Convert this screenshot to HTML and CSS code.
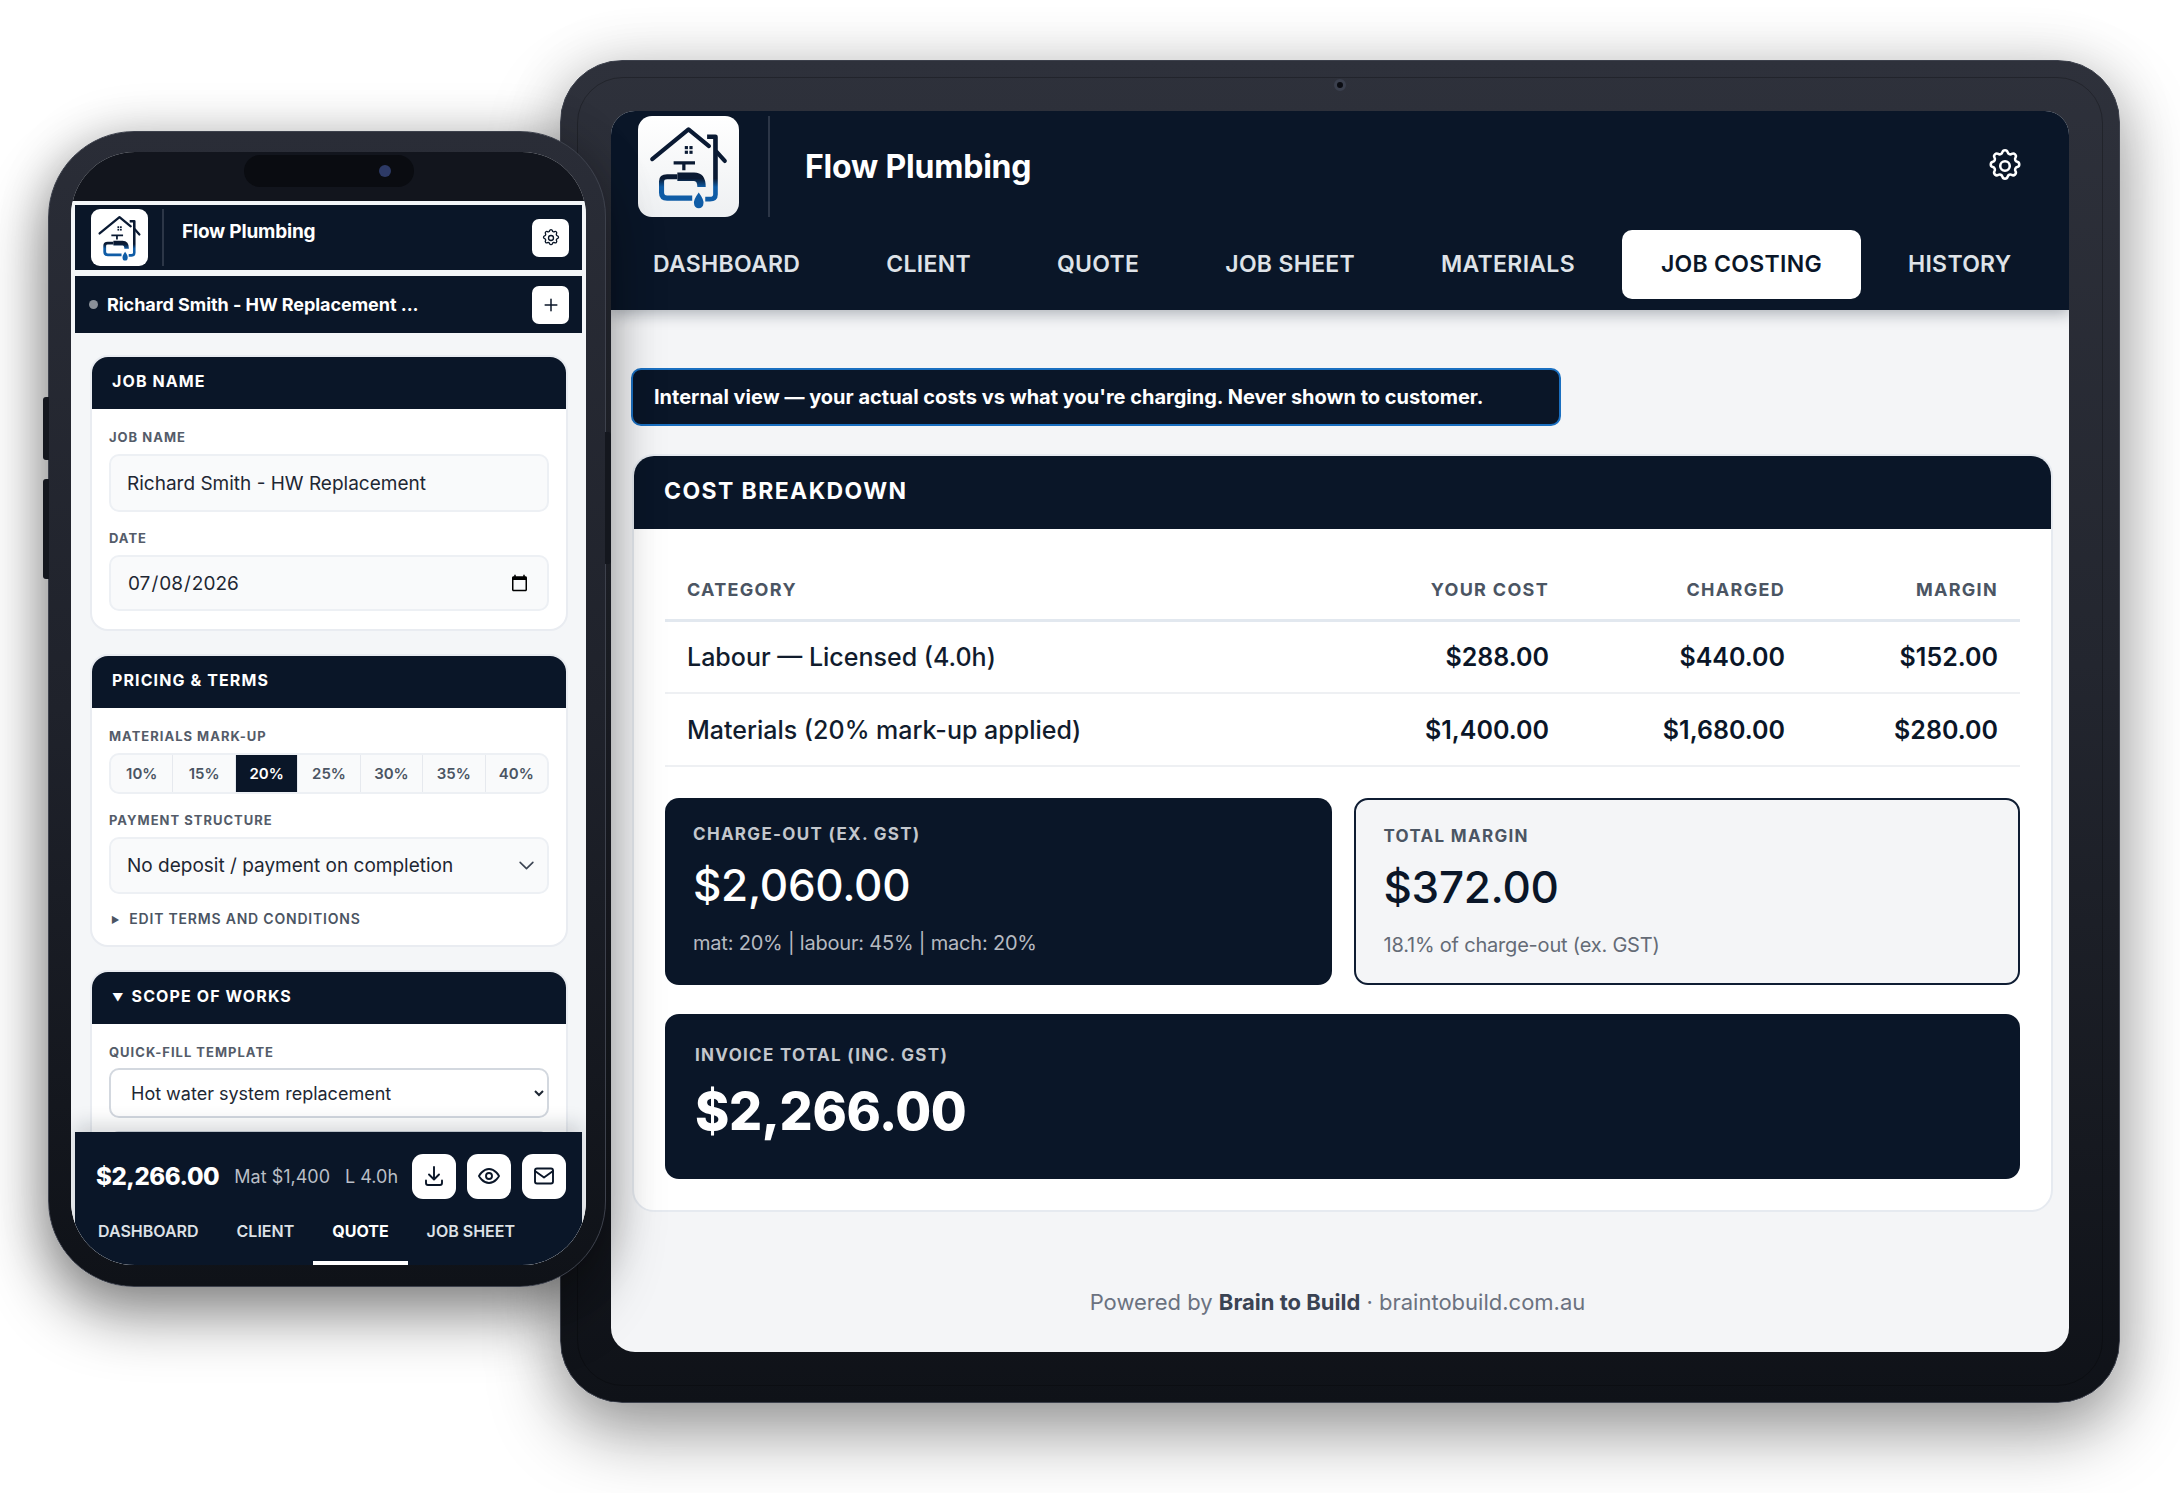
FILE: index.html
```html
<!DOCTYPE html>
<html lang="en">
<head>
<meta charset="UTF-8">
<meta name="viewport" content="width=device-width, initial-scale=1">
<title>Flow Plumbing</title>
<link rel="stylesheet" href="styles.css">
</head>
<body>

<svg class="defs" width="0" height="0">
<defs>
<linearGradient id="logoInk" gradientUnits="userSpaceOnUse" x1="0" y1="0" x2="0" y2="100">
<stop offset="0.63" stop-color="#0a1a33"/>
<stop offset="0.72" stop-color="#0f5ca6"/>
</linearGradient>
<symbol id="logo" viewBox="0 0 100 100">
<g fill="none" stroke="url(#logoInk)" stroke-linecap="round" stroke-linejoin="round">
<path stroke-width="4.5" d="M11 42 50 10 72 28M80 34 89 44"/>
<path stroke-width="5" stroke-linecap="butt" d="M70 18H79V80Q79 85 73 85H68"/>
<path stroke-width="3.5" stroke-linecap="butt" d="M34 46H57M45 46V54"/>
<path stroke-width="5.5" stroke-linecap="butt" d="M54 84H27Q21 84 21 78V66Q21 61 27 61H38"/>
<path stroke-width="9" stroke-linecap="butt" d="M38 61H56Q64 61 64 72"/>
</g>
<g fill="#0a1a33">
<rect x="46" y="28" width="3.4" height="3.4"/><rect x="51" y="28" width="3.4" height="3.4"/>
<rect x="46" y="33" width="3.4" height="3.4"/><rect x="51" y="33" width="3.4" height="3.4"/>
</g>
<path fill="#0f5ca6" d="M61 78Q67 86 66 90A5 5 0 0 1 56 90Q55 86 61 78Z"/>
</symbol>
<symbol id="gear" viewBox="0 0 24 24">
<path fill="none" stroke="currentColor" stroke-width="1.6" stroke-linecap="round" stroke-linejoin="round" d="M10.33 3.32c.43-1.76 2.93-1.76 3.35 0a1.72 1.72 0 0 0 2.57 1.07c1.54-.94 3.31.83 2.37 2.37a1.72 1.72 0 0 0 1.07 2.57c1.76.43 1.76 2.93 0 3.35a1.72 1.72 0 0 0-1.07 2.57c.94 1.54-.83 3.31-2.37 2.37a1.72 1.72 0 0 0-2.57 1.07c-.43 1.76-2.93 1.76-3.35 0a1.72 1.72 0 0 0-2.57-1.07c-1.54.94-3.31-.83-2.37-2.37a1.72 1.72 0 0 0-1.07-2.57c-1.76-.43-1.76-2.93 0-3.35a1.72 1.72 0 0 0 1.07-2.57c-.94-1.54.83-3.31 2.37-2.37 1 .6 2.3.07 2.57-1.07Z"/>
<circle cx="12" cy="12" r="3" fill="none" stroke="currentColor" stroke-width="1.6"/>
</symbol>
</defs>
</svg>

<!-- Tablet -->
<div class="tablet">
<span class="tablet-cam"></span>
<div class="tablet-screen">
<header class="t-header">
<div class="t-brand">
<div class="t-logo"><svg><use href="#logo"/></svg></div>
<div class="t-title">Flow Plumbing</div>
<svg class="t-gear"><use href="#gear"/></svg>
</div>
<nav class="t-nav">
<a>Dashboard</a>
<a>Client</a>
<a>Quote</a>
<a>Job Sheet</a>
<a>Materials</a>
<a class="active">Job Costing</a>
<a>History</a>
</nav>
</header>

<main class="t-main">
<div class="banner">Internal view — your actual costs vs what you're charging. Never shown to customer.</div>

<section class="t-card">
<h2>Cost Breakdown</h2>
<div class="t-card-body">
<table class="costs">
<thead>
<tr><th>Category</th><th>Your Cost</th><th>Charged</th><th>Margin</th></tr>
</thead>
<tbody>
<tr><td>Labour — Licensed (4.0h)</td><td>$288.00</td><td>$440.00</td><td>$152.00</td></tr>
<tr><td>Materials (20% mark-up applied)</td><td>$1,400.00</td><td>$1,680.00</td><td>$280.00</td></tr>
</tbody>
</table>

<div class="stats">
<div class="stat dark">
<div class="stat-label">Charge-out (ex. GST)</div>
<div class="stat-value">$2,060.00</div>
<div class="stat-sub">mat: 20% | labour: 45% | mach: 20%</div>
</div>
<div class="stat light">
<div class="stat-label">Total Margin</div>
<div class="stat-value">$372.00</div>
<div class="stat-sub">18.1% of charge-out (ex. GST)</div>
</div>
</div>

<div class="invoice">
<div class="stat-label">Invoice Total (inc. GST)</div>
<div class="invoice-value">$2,266.00</div>
</div>
</div>
</section>

<footer class="t-footer">Powered by <b>Brain to Build</b> · braintobuild.com.au</footer>
</main>
</div>
</div>

<!-- Phone -->
<div class="phone">
<span class="side-btn btn-a"></span>
<span class="side-btn btn-b"></span>
<span class="side-btn btn-c"></span>
<div class="phone-screen">
<div class="notch-zone"><div class="notch"><span></span></div></div>
<div class="p-app">
<div class="p-header">
<div class="p-logo"><svg><use href="#logo"/></svg></div>
<div class="p-title">Flow Plumbing</div>
<button class="p-icon-btn"><svg><use href="#gear"/></svg></button>
</div>
<div class="p-session">
<span class="dot"></span>
<span class="p-job">Richard Smith - HW Replacement ...</span>
<button class="p-icon-btn">
<svg viewBox="0 0 24 24"><path fill="none" stroke="currentColor" stroke-width="1.8" stroke-linecap="round" d="M12 5v14M5 12h14"/></svg>
</button>
</div>

<div class="p-scroll">
<section class="p-card">
<h3>Job Name</h3>
<div class="p-card-body">
<label class="p-label">Job Name</label>
<input class="p-input" value="Richard Smith - HW Replacement">
<label class="p-label next">Date</label>
<input class="p-input date" type="date" value="2026-07-08">
</div>
</section>

<section class="p-card">
<h3>Pricing &amp; Terms</h3>
<div class="p-card-body">
<label class="p-label">Materials Mark-up</label>
<div class="seg">
<span>10%</span><span>15%</span><span class="on">20%</span><span>25%</span><span>30%</span><span>35%</span><span>40%</span>
</div>
<label class="p-label next">Payment Structure</label>
<div class="p-select-wrap">
<select class="p-input plain"><option>No deposit / payment on completion</option></select>
<svg class="chev" viewBox="0 0 16 16"><path fill="none" stroke="currentColor" stroke-width="1.5" stroke-linecap="round" stroke-linejoin="round" d="M2 5l6 6 6-6"/></svg>
</div>
<div class="p-terms"><span class="tri">►</span>Edit terms and conditions</div>
</div>
</section>

<section class="p-card">
<h3><span class="tri-down">▼</span>Scope of Works</h3>
<div class="p-card-body">
<label class="p-label">Quick-fill Template</label>
<select class="p-input white"><option>Hot water system replacement</option></select>
<div class="p-input white ghost"></div>
</div>
</section>
</div>

<div class="p-bottom">
<div class="p-summary">
<b class="p-total">$2,266.00</b>
<span class="p-meta">Mat $1,400</span>
<span class="p-meta l">L 4.0h</span>
<div class="p-actions">
<button class="p-act">
<svg viewBox="0 0 24 24" fill="none" stroke="currentColor" stroke-width="1.9" stroke-linecap="round" stroke-linejoin="round"><path d="M12 3v12M7 10.5l5 5 5-5M4 16.5V19a2 2 0 0 0 2 2h12a2 2 0 0 0 2-2v-2.5"/></svg>
</button>
<button class="p-act">
<svg viewBox="0 0 24 24" fill="none" stroke="currentColor" stroke-width="1.9" stroke-linecap="round" stroke-linejoin="round"><path d="M2 12s3.6-7 10-7 10 7 10 7-3.6 7-10 7-10-7-10-7Z"/><circle cx="12" cy="12" r="3"/></svg>
</button>
<button class="p-act">
<svg viewBox="0 0 24 24" fill="none" stroke="currentColor" stroke-width="1.9" stroke-linecap="round" stroke-linejoin="round"><rect x="3" y="4.5" width="18" height="15" rx="2"/><path d="M3 7l9 6.5L21 7"/></svg>
</button>
</div>
</div>
<nav class="p-nav">
<a>Dashboard</a>
<a>Client</a>
<a class="active">Quote</a>
<a>Job Sheet</a>
</nav>
</div>
</div>
</div>
</div>

</body>
</html>
```

FILE: styles.css
```css
*{margin:0;padding:0;box-sizing:border-box;}
html,body{width:2180px;height:1493px;overflow:hidden;}
body{position:relative;background:#fff;font-family:"Inter","Liberation Sans",sans-serif;color:#0a1628;}
.defs{position:absolute;}
button{border:none;cursor:pointer;font-family:inherit;}

/* Tablet */
.tablet{
position:absolute;left:560px;top:60px;width:1560px;height:1343px;padding:50px;
border-radius:62px;border:1px solid #3d414c;
background:linear-gradient(180deg,#2e313b 0%,#23262f 45%,#0f1218 100%);
box-shadow:0 0 60px rgba(0,0,0,.12),0 30px 70px rgba(0,0,0,.38);
}
.tablet::before{
content:"";position:absolute;inset:16px;border-radius:46px;border:1px solid rgba(0,0,0,.25);
}
.tablet-cam{
position:absolute;left:773px;top:18px;width:12px;height:12px;border-radius:50%;
background:#0a0c12;border:3px solid #3a3f4d;
}
.tablet-screen{
position:relative;height:100%;border-radius:24px;overflow:hidden;background:#f4f5f7;
display:flex;flex-direction:column;
}

.t-header{background:#0a1628;height:199px;box-shadow:0 4px 14px rgba(10,22,40,.3);flex:none;position:relative;}
.t-brand{display:flex;align-items:center;height:110px;padding:0 27px;}
.t-logo{
width:101px;height:101px;border-radius:14px;background:linear-gradient(180deg,#fff,#eef0f2);flex:none;padding:4px;
margin-top:1px;
}
.t-logo svg{width:93px;height:93px;display:block;}
.t-title{
margin-left:29px;padding-left:35px;height:101px;line-height:101px;border-left:2px solid #2c3647;
font-size:32px;font-weight:700;color:#fff;letter-spacing:-.2px;flex:1;
}
.t-gear{width:38px;height:38px;color:#fff;margin-right:18px;}
.t-nav{display:flex;align-items:center;gap:8px;padding:9px 0 0 3px;}
.t-nav a{
height:69px;line-height:69px;padding:0 39px;border-radius:10px;white-space:nowrap;
font-size:23px;font-weight:600;text-transform:uppercase;color:#dfe3e8;letter-spacing:.3px;
}
.t-nav a.active{background:#fff;color:#0a1628;}

.t-main{flex:1;padding:58px 18px 0 21px;display:flex;flex-direction:column;align-items:flex-start;}
.banner{
width:930px;height:58px;line-height:54px;padding-left:21px;border:2px solid #1a6fc0;border-radius:10px;
background:#0a1628;color:#fff;font-size:20px;font-weight:700;white-space:nowrap;margin-left:-1px;
}
.t-card{
width:1421px;margin-top:28px;background:#fff;border:2px solid #e6eaf0;border-radius:22px;overflow:hidden;
}
.t-card h2{
height:75px;line-height:74px;padding-left:32px;margin:-2px -2px 0;background:#0a1628;color:#fff;
font-size:23px;font-weight:700;text-transform:uppercase;letter-spacing:1.4px;
}
.t-card-body{padding:31px 31px 31px;}

.costs{width:100%;border-collapse:collapse;table-layout:fixed;}
.costs th{
height:60px;font-size:18px;font-weight:700;color:#4b5563;text-transform:uppercase;letter-spacing:1.3px;
text-align:right;padding:0 22px 0 0;border-bottom:3px solid #e2e8ef;
}
.costs th:nth-child(1),.costs td:nth-child(1){text-align:left;padding:0 0 0 22px;width:auto;}
.costs th:nth-child(2){width:236px;}
.costs th:nth-child(3){width:236px;}
.costs th:nth-child(4){width:213px;}
.costs td{
height:73px;font-size:25px;font-weight:600;text-align:right;padding:0 22px 0 0;border-bottom:2px solid #eef0f3;
}
.costs td:nth-child(1){font-weight:500;font-size:25px;color:#111c2d;}

.stats{display:grid;grid-template-columns:1fr 1fr;gap:22px;margin-top:31px;}
.stat{height:187px;border-radius:14px;padding:24px 28px;}
.stat.dark{background:#0a1628;color:#fff;}
.stat.light{background:#f4f5f7;border:2px solid #0f1d33;padding:24px 28px;}
.stat-label{font-size:17px;font-weight:700;text-transform:uppercase;letter-spacing:1.3px;color:#c3c7cd;line-height:24px;}
.stat.light .stat-label{color:#4b5563;}
.stat-value{font-size:44px;font-weight:500;line-height:60px;margin-top:9px;letter-spacing:-.3px;}
.stat-sub{font-size:20px;line-height:28px;margin-top:14px;color:#b6bac1;letter-spacing:-.2px;}
.stat.light .stat-sub{color:#646b76;}
.invoice{height:165px;margin-top:29px;border-radius:14px;background:#0a1628;color:#fff;padding:29px 30px;}
.invoice-value{font-size:52px;font-weight:800;line-height:66px;margin-top:12px;letter-spacing:-.4px;}
.t-footer{
align-self:center;margin:75px 0 0 -8px;font-size:22px;color:#6b7280;line-height:30px;
}
.t-footer b{color:#3a4353;font-weight:700;}

/* Phone */
.phone{
position:absolute;left:48px;top:131px;width:558px;height:1156px;padding:20px 19px 21px 22px;
border-radius:86px;border:1px solid #3d414c;
background:linear-gradient(180deg,#2a2d37 0%,#1f222b 50%,#0f1218 100%);
box-shadow:0 0 50px rgba(0,0,0,.18),-4px 30px 60px rgba(0,0,0,.42);
}
.side-btn{position:absolute;background:#14171e;}
.btn-a{left:-6px;top:265px;width:6px;height:63px;border-radius:3px 0 0 3px;}
.btn-b{left:-6px;top:347px;width:6px;height:100px;border-radius:3px 0 0 3px;}
.btn-c{right:-6px;top:300px;width:6px;height:132px;border-radius:0 3px 3px 0;}
.phone-screen{
height:100%;border-radius:64px;overflow:hidden;background:#eef1f5;display:flex;flex-direction:column;
}
.notch-zone{height:49px;background:#12151d;flex:none;display:flex;justify-content:center;padding-top:3px;}
.notch{
width:170px;height:32px;border-radius:16px;background:#0a0c11;display:flex;align-items:center;
justify-content:flex-end;padding-right:23px;
}
.notch span{width:12px;height:12px;border-radius:50%;background:#2d3a66;}

.p-app{flex:1;min-height:0;display:flex;flex-direction:column;padding:4px 4px 0;background:#f4f6f8;}
.p-header,.p-session{background:#0a1628;display:flex;align-items:center;flex:none;color:#fff;}
.p-header{height:65px;padding:0 13px 0 16px;}
.p-session{height:57px;margin-top:6px;padding:0 13px 0 14px;}
.p-logo{width:57px;height:57px;border-radius:9px;background:#fff;padding:3px;flex:none;}
.p-logo svg{width:51px;height:51px;display:block;}
.p-title{
margin-left:14px;padding:5px 0 0 18px;height:57px;line-height:36px;border-left:2px solid #2c3647;
font-size:19px;font-weight:700;flex:1;letter-spacing:-.2px;
}
.p-icon-btn{
width:37px;height:38px;border-radius:7px;background:#fff;color:#0a1628;display:flex;align-items:center;
justify-content:center;flex:none;
}
.p-icon-btn svg{width:20px;height:20px;}
.dot{width:9px;height:9px;border-radius:50%;background:#8a9099;flex:none;}
.p-job{margin-left:9px;font-size:18px;font-weight:700;flex:1;white-space:nowrap;letter-spacing:-.05px;}

.p-scroll{flex:1;min-height:0;overflow:hidden;padding:22px 14px 0 15px;}
.p-card{background:#fff;border:2px solid #e9ecf1;border-radius:18px;margin-bottom:23px;overflow:hidden;}
.p-card h3{
height:54px;line-height:52px;padding-left:22px;margin:-2px -2px 0;background:#0a1628;color:#fff;
font-size:16px;font-weight:700;text-transform:uppercase;letter-spacing:1.1px;
}
.tri-down{font-size:11px;margin-right:7px;position:relative;top:-1px;}
.p-card-body{padding:20px 17px 18px;}
.p-label{
display:block;height:16px;line-height:16px;font-size:13px;font-weight:700;text-transform:uppercase;
letter-spacing:1px;color:#545c69;margin-bottom:9px;
}
.p-label.next{margin-top:18px;}
.p-input{
display:block;width:100%;height:58px;padding:0 16px;border:2px solid #edf0f4;border-radius:10px;background:#f9fafb;
font-family:inherit;font-size:19px;color:#1e2733;outline:none;
}
.p-input.date{height:56px;}
.p-input.plain{appearance:none;height:57px;}
.p-input.white{background:#fff;border-color:#d3d8df;height:50px;font-size:18px;margin-top:-1px;}
.p-input.ghost{margin-top:13px;background:#f9fafb;}
.p-select-wrap{position:relative;}
.chev{position:absolute;right:14px;top:20px;width:17px;height:17px;color:#3b4452;}
.seg{display:flex;height:41px;border:2px solid #edf0f4;border-radius:10px;overflow:hidden;background:#f9fafb;}
.seg span{
flex:1;text-align:center;line-height:37px;font-size:15px;font-weight:600;color:#4b5563;border-right:1px solid #e6e9ee;
}
.seg span:last-child{border-right:none;}
.seg span.on{background:#0a1628;color:#fff;}
.p-terms{
margin-top:17px;height:16px;line-height:16px;font-size:14px;font-weight:600;text-transform:uppercase;
letter-spacing:.8px;color:#4b5563;padding-left:2px;white-space:nowrap;
}
.tri{font-size:9px;margin-right:9px;position:relative;top:-1px;}

.p-bottom{flex:none;height:133px;margin-top:0;background:#0a1628;color:#fff;box-shadow:0 -8px 18px rgba(10,22,40,.16);position:relative;}
.p-summary{display:flex;align-items:center;height:74px;padding:14px 16px 0 21px;}
.p-total{font-size:24px;font-weight:800;letter-spacing:-.4px;}
.p-meta{font-size:18px;color:#b9bec6;margin-left:15px;white-space:nowrap;}
.p-meta.l{margin-left:15px;}
.p-actions{display:flex;gap:11px;margin-left:auto;}
.p-act{
width:44px;height:45px;border-radius:11px;background:#fff;color:#0a1628;display:flex;align-items:center;justify-content:center;
}
.p-act svg{width:24px;height:24px;}
.p-nav{display:flex;height:59px;padding-left:4px;}
.p-nav a{
position:relative;padding:0 19px;line-height:50px;white-space:nowrap;font-size:16px;font-weight:600;
text-transform:uppercase;color:#dde1e6;
}
.p-nav a.active{color:#fff;font-weight:700;}
.p-nav a.active::after{content:"";position:absolute;left:0;right:0;bottom:0;height:4px;background:#fff;}
```
